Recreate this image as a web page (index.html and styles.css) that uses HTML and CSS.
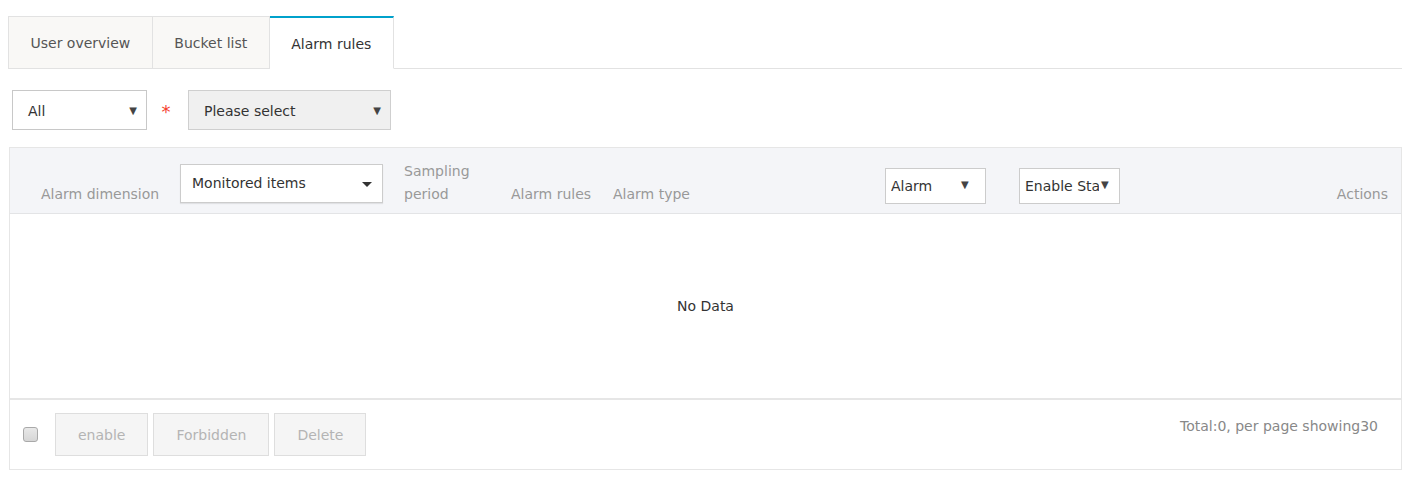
FILE: index.html
```html
<!DOCTYPE html>
<html>
<head>
<meta charset="utf-8">
<link rel="stylesheet" href="styles.css">
</head>
<body>
<div class="page">
  <div class="tabs">
    <div class="tab">User overview</div>
    <div class="tab">Bucket list</div>
    <div class="tab active">Alarm rules</div>
  </div>

  <div class="filters">
    <div class="fsel all"><span>All</span><span class="arr">▼</span></div>
    <span class="req">*</span>
    <div class="fsel please"><span>Please select</span><span class="arr">▼</span></div>
  </div>

  <div class="table">
    <div class="thead">
      <div class="th c1">Alarm dimension</div>
      <div class="th c2">
        <div class="dd"><span>Monitored items</span><span class="caret"></span></div>
      </div>
      <div class="th c3">Sampling<br>period</div>
      <div class="th c4">Alarm rules</div>
      <div class="th c5">Alarm type</div>
      <div class="th c6">
        <div class="nsel w101"><span class="txt">Alarm</span><span class="arr">▼</span></div>
      </div>
      <div class="th c7">
        <div class="nsel w101"><span class="txt clip">Enable Status</span><span class="arr tight">▼</span></div>
      </div>
      <div class="th c8">Actions</div>
    </div>
    <div class="tbody">No Data</div>
    <div class="tfoot">
      <div class="left">
        <span class="cb"></span>
        <button class="btn">enable</button>
        <button class="btn">Forbidden</button>
        <button class="btn">Delete</button>
      </div>
      <div class="total">Total:0, per page showing30</div>
    </div>
  </div>
</div>
</body>
</html>
```

FILE: styles.css
```css
* { box-sizing: border-box; }
html, body { margin: 0; padding: 0; background: #fff; }
body {
  font-family: "DejaVu Sans", Tahoma, sans-serif;
  font-size: 14px;
  color: #333;
}
.page { padding: 16px 18px 0 8px; }

.tabs {
  display: flex;
  height: 53px;
  border-bottom: 1px solid #e2e2e2;
}
.tab {
  height: 53px;
  padding: 0 21.5px;
  display: flex;
  align-items: center;
  background: #f9f8f6;
  border: 1px solid #e2e2e2;
  border-left: none;
  color: #555;
  font-size: 14px;
}
.tab:first-child { border-left: 1px solid #e2e2e2; }
.tab.active {
  background: #fff;
  color: #333;
  border-top: 2px solid #00a1cb;
  border-bottom-color: #fff;
  height: 53px;
  padding-top: 1px;
}

.filters {
  display: flex;
  align-items: center;
  margin-top: 21px;
  padding-left: 4px;
}
.fsel {
  height: 40px;
  border: 1px solid #c8c8c8;
  display: flex;
  align-items: center;
  justify-content: space-between;
  padding: 2px 9px 0 15px;
  font-size: 14px;
  color: #333;
}
.fsel.all { width: 135px; background: #fff; }
.fsel.please { width: 203px; background: #f0f0f0; border-color: #cfcfcf; }
.arr { font-size: 10px; color: #444; margin-top: -2px; }
.req { color: #f5412d; font-size: 18px; width: 41px; text-align: center; padding-right: 3px; margin-top: 2px; }

.table { margin-top: 17px; margin-left: 1px; }
.thead {
  display: flex;
  align-items: flex-end;
  height: 67px;
  background: #f4f5f8;
  border: 1px solid #e6e6e6;
  border-bottom: 1px solid #e3e4e6;
  padding-bottom: 7px;
}
.th { color: #999; font-size: 14px; line-height: 23px; }
.c1 { width: 170px; padding-left: 31px; }
.c2 { width: 224px; padding-bottom: 1px; }
.c3 { width: 107px; }
.c4 { width: 102px; }
.c5 { width: 272px; }
.c6 { width: 134px; padding-bottom: 2px; }
.c7 { flex: 1; padding-bottom: 2px; }
.c8 { padding-right: 13px; }

.dd {
  width: 203px;
  height: 39px;
  background: #fff;
  border: 1px solid #cccccc;
  box-shadow: 0 1px 1px rgba(0,0,0,0.08);
  display: flex;
  align-items: center;
  justify-content: space-between;
  padding: 0 10px 0 11px;
  color: #333;
  font-size: 14px;
  margin-bottom: 2px;
}
.caret {
  width: 0; height: 0;
  border-left: 5px solid transparent;
  border-right: 5px solid transparent;
  border-top: 5px solid #333;
  margin-top: 1px;
}
.nsel {
  height: 36px;
  background: #fff;
  border: 1px solid #ccc;
  display: flex;
  align-items: center;
  padding: 0 0 0 5px;
  color: #333;
  font-size: 14px;
}
.w101 { width: 101px; }
.nsel .txt { flex: 1; white-space: nowrap; overflow: hidden; }
.nsel .txt.clip { width: 74px; flex: none; }
.nsel .arr { width: 26px; text-align: left; padding-left: 2px; margin-top: -3px; }
.nsel .arr.tight { width: 18px; padding-left: 2px; }

.tbody {
  height: 186px;
  border-left: 1px solid #e6e6e6;
  border-right: 1px solid #e6e6e6;
  border-bottom: 2px solid #e6e6e6;
  display: flex;
  align-items: center;
  justify-content: center;
  color: #333;
  font-size: 14px;
}
.tfoot {
  height: 70px;
  border: 1px solid #e6e6e6;
  border-top: none;
  display: flex;
  justify-content: space-between;
  align-items: flex-start;
}
.left {
  display: flex;
  align-items: center;
  padding-left: 13px;
  padding-top: 13px;
}
.cb {
  width: 15px; height: 15px;
  border: 1px solid #a9a9a9;
  border-radius: 3px;
  background: linear-gradient(#e8e8e8, #d6d6d6);
  margin-right: 17px;
}
.btn {
  height: 43px;
  padding: 0 22px;
  margin: 0 5px 0 0;
  background: #f5f5f5;
  border: 1px solid #dedede;
  color: #b4b4b4;
  font-family: inherit;
  font-size: 14px;
}
.total {
  color: #888;
  font-size: 14px;
  padding-right: 23px;
  padding-top: 18px;
}
```
